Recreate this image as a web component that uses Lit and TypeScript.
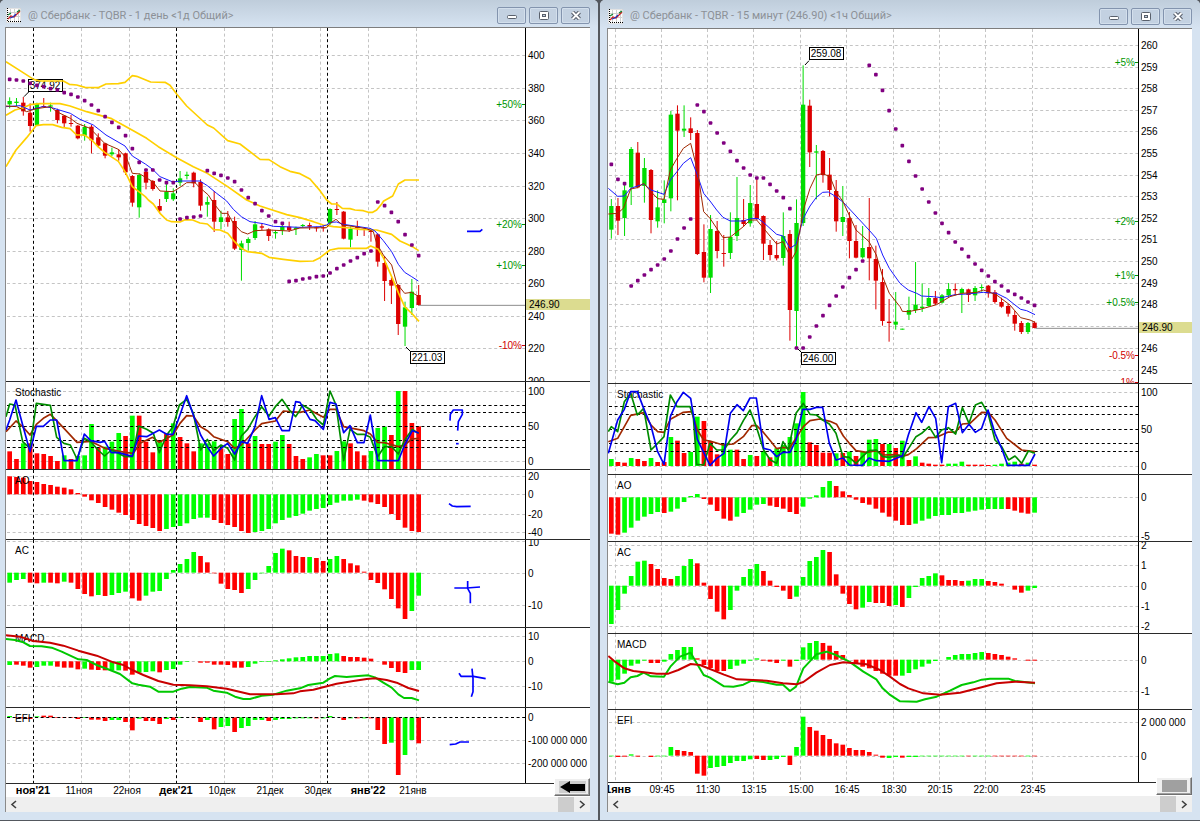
import { LitElement, html, svg, css } from "lit";
import { customElement, property } from "lit/decorators.js";

/* Geometry is kept in chart units: three units make one CSS pixel. */
const UNIT = 3;

type Label = [y: number, text: string];

interface Line {
  kind: "thin" | "mid" | "thick";
  color: string;
  points: string;
}

interface Pane {
  name: string;
  height: number;
  base: number;
  grid: number[];
  levels?: number[];
  labels: Label[];
  percents?: Label[];
  zero?: number;
  bars?: string;
  candles?: string;
  dots?: string;
  lines?: Line[];
  flags?: { x: number; y: number; text: string; from: string }[];
  last?: { y: number; x: number; text: string };
  notes?: string[];
}

interface Chart {
  title: string;
  titleHeight: number;
  padLeft: number;
  originX: number;
  originY: number;
  axisWidth: number;
  timeHeight: number;
  scrollHeight: number;
  firstBar: number;
  step: number;
  verticals: number[];
  months: number[];
  panes: Pane[];
  times: [x: number, text: string, bold?: boolean][];
  arrow: boolean;
}

const YELLOW = "#ffd000";
const BLUE = "#1a1aff";
const BROWN = "#a02800";

const daily: Chart = {
  title: "@ Сбербанк - TQBR - 1 день <1д Общий>",
  titleHeight: 27,
  padLeft: 6,
  originX: 18,
  originY: 84,
  axisWidth: 65,
  timeHeight: 13,
  scrollHeight: 15,
  firstBar: 29,
  step: 20.45,
  verticals: [245, 389, 674, 818, 962, 1104, 1248],
  months: [101, 530, 982],
  arrow: true,
  times: [
    [99, "ноя'21", true], [237, "11ноя"], [381, "22ноя"], [528, "дек'21", true], [666, "10дек"],
    [810, "21дек"], [954, "30дек"], [1104, "янв'22", true], [1239, "21янв"],
  ],
  panes: [
    {
      name: "", height: 354, base: 0,
      grid: [164, 265, 361, 458, 558, 655, 752, 849, 949, 1045],
      labels: [[164, "400"], [265, "380"], [361, "360"], [458, "340"], [558, "320"], [655, "300"], [752, "280"], [849, "260"], [949, "240"], [1045, "220"], [1143, "200"]],
      percents: [[312, "+50%"], [672, "+20%"], [794, "+10%"], [1034, "-10%"]],
      candles:
        "292,303,313,325g 294,305,309,318g 291,308,334,347r 310,338,378,395r 308,311,376,378g 294,318,321,322r 308,316,320,335g 326,330,360,370r 345,347,370,382r 345,369,372,380r 375,377,415,418r 372,381,407,422g 375,380,421,460r 400,412,437,442r 428,430,467,475r 443,457,463,468g 447,463,472,482r 458,460,517,525r 525,528,608,620r 520,525,622,653g 508,515,548,568r 540,543,567,572r 597,618,632,640r 545,575,597,606g 565,580,598,603g 513,535,548,558g 515,524,528,538g 515,518,550,562r 538,546,617,632r 590,606,614,650g 573,600,665,696r 632,652,666,688g 633,652,666,680r 650,663,746,750r 722,730,750,842g 712,717,729,752g 663,673,714,720g 670,679,683,690r 685,688,708,723r 690,696,700,716g 675,680,691,705g 665,680,690,696r 680,683,687,705g 672,675,678,682g 668,675,680,690r 680,682,685,695r 678,682,685,695r 625,627,670,675g 606,627,630,645r 633,635,716,718r 680,687,719,742g 662,680,685,708r 685,687,690,708r 688,692,696,725r 700,703,785,800r 768,789,843,903r 833,840,857,912r 853,855,972,1005r 905,922,980,1038g 837,875,924,945g 855,885,915,917r",
      dots: "238 240 243 250 256 260 266 270 278 283 291 302 315 332 350 367 382 407 446 487 510 510 540 548 548 657 653 651 648 512 520 526 534 545 570 593 611 632 648 665 670 844 842 837 834 830 828 819 806 795 783 773 761 753 606 617 637 665 704 735 767",
      lines: [
        { kind: "mid", color: YELLOW, points: "18,185 60,212 101,238 120,243 190,243 208,253 230,255 255,262 294,263 318,252 355,251 375,247 397,227 410,229 452,246 495,247 510,256 530,282 560,318 622,375 641,384 683,422 720,432 780,478 807,479 840,500 870,514 900,521 930,537 960,572 980,600 995,612 1010,612 1027,625 1050,626 1065,630 1090,632 1105,637 1118,637 1130,630 1145,612 1150,604 1178,588 1195,552 1215,540 1257,540" },
        { kind: "mid", color: YELLOW, points: "18,346 45,330 68,324 90,314 120,311 180,311 210,318 260,335 335,356 400,392 440,415 475,440 530,473 580,500 622,520 683,560 740,600 780,618 810,628 860,644 900,653 940,665 970,675 1000,680 1050,684 1080,688 1130,690 1175,703 1200,723 1220,732 1237,740 1256,752" },
        { kind: "mid", color: YELLOW, points: "18,500 48,450 80,413 108,377 130,374 158,374 185,382 210,386 230,405 253,405 275,420 294,440 314,457 355,484 375,515 385,535 397,560 436,590 445,600 460,612 480,640 500,660 515,665 540,666 555,659 578,660 600,669 622,672 641,689 660,690 683,700 704,725 724,745 743,755 785,760 807,772 850,778 900,784 940,783 960,773 990,750 1015,745 1100,745 1112,738 1135,748 1150,773 1175,830 1195,878 1214,920 1237,942 1257,964" },
        { kind: "thin", color: BLUE, points: "18,320 60,317 90,330 128,320 155,323 211,340 240,358 280,375 318,405 375,438 397,468 436,492 458,508 480,530 519,546 540,543 600,543 622,557 650,580 680,603 700,628 724,650 750,665 790,671 820,679 900,682 960,680 980,675 990,667 1010,666 1030,673 1110,685 1125,693 1150,722 1175,755 1195,793 1214,817 1235,830 1255,843" },
        { kind: "thin", color: BROWN, points: "18,318 50,320 80,335 109,326 151,320 170,335 211,355 231,370 270,385 314,430 355,448 380,475 397,520 420,522 458,545 480,573 519,575 540,562 560,548 585,548 602,565 625,585 641,610 665,640 683,640 700,670 724,695 743,702 765,692 807,690 868,693 900,684 980,683 990,670 1008,658 1027,675 1050,678 1100,686 1120,695 1130,730 1150,765 1175,795 1190,850 1214,880 1235,877 1257,890" },
      ],
      flags: [
        { x: 85, y: 237, text: "374.92", from: "86,276 72,290" },
        { x: 1231, y: 1054, text: "221.03", from: "1231,1054 1218,1041" },
      ],
      last: { y: 916, x: 1257, text: "246.90" },
      notes: ["1401,694 1440,694 1447,688"],
    },
    {
      name: "Stochastic", height: 88, base: 1140,
      grid: [33, 243], levels: [75, 97, 139, 181, 202],
      labels: [[33, "100"], [139, "50"], [243, "0"]],
      zero: 267,
      bars: "214r 237r 190g 190r 220r 222r 228r 243r 226g 237r 228g 226g 132g 202r 200g 185g 159g 168r 107g 107r 185r 217r 180g 160r 130g 171r 190r 214r 190g 190g 184g 205r 222r 117g 87g 190r 168g 192r 192r 185g 165g 192r 228r 237r 232g 222g 226r 226r 213g 184g 190r 214r 226r 213g 144g 140g 165r 33g 33r 129r 139r",
      lines: [
        { kind: "mid", color: BROWN, points: "18,155 48,123 68,140 90,165 109,133 130,115 151,103 170,122 192,145 231,187 272,184 314,205 375,217 400,220 420,190 458,172 478,187 519,165 540,130 560,107 580,108 602,140 622,152 641,170 683,185 704,205 724,195 765,150 785,131 826,123 850,93 900,97 930,90 970,112 990,88 1008,88 1031,140 1092,152 1111,162 1133,187 1153,188 1195,200 1214,195 1235,177 1256,175" },
        { kind: "mid", color: "#008c00", points: "18,110 29,72 45,75 68,185 90,205 109,70 151,76 170,172 192,190 211,195 231,237 253,175 272,185 294,210 314,228 334,210 355,220 375,230 397,229 416,138 440,148 460,160 478,218 500,165 519,140 538,75 560,58 580,100 602,210 622,178 641,212 663,195 683,205 704,240 724,168 743,148 765,110 785,80 807,108 826,80 846,58 868,90 887,110 900,90 907,75 930,88 950,118 970,135 990,33 1008,75 1031,242 1050,148 1072,163 1092,163 1111,172 1133,230 1153,200 1175,200 1195,222 1214,180 1237,148 1256,160" },
        { kind: "mid", color: "#0000f0", points: "18,150 29,120 48,60 68,135 90,215 109,139 130,139 151,120 170,120 192,242 231,242 253,162 272,182 300,187 314,184 334,218 355,218 397,229 416,168 440,170 478,150 500,163 519,163 538,110 560,47 580,105 602,165 622,200 641,228 663,205 683,190 704,222 724,185 743,190 765,140 785,47 807,118 826,113 846,152 868,152 887,65 900,67 930,118 945,122 970,148 990,67 1008,72 1031,158 1050,137 1072,188 1092,188 1111,105 1133,242 1195,242 1214,195 1237,152 1256,159" },
      ],
      notes: ["1350,122 1351,103 1360,90 1387,90 1387,103 1375,125 1373,152", "1368,191 1376,191"],
    },
    {
      name: "AO", height: 70, base: 1140,
      grid: [288, 343, 401, 457],
      labels: [[288, "20"], [343, "0"], [401, "-20"], [457, "-40"]],
      zero: 343,
      bars: "289r 291r 293r 303r 306r 312r 315r 320r 323r 328r 339r 350r 361r 369r 381r 389r 398r 405r 420r 432r 438r 444r 453r 447g 441g 438g 430g 417g 413g 413g 420r 429r 435r 441r 453r 459r 456g 453g 447g 430g 420g 413g 408g 401g 392g 387g 384g 375g 368g 362g 362g 359g 362r 367r 372r 381r 402r 420r 443r 453r 456r",
      notes: ["1347,371 1357,378 1370,380 1412,379"],
    },
    {
      name: "AC", height: 88, base: 1140,
      grid: [484, 578, 676],
      labels: [[487, "10"], [578, "0"], [676, "-10"]],
      zero: 578,
      bars: "608g 600g 597g 608r 610r 608g 608r 610r 605g 608r 627r 642r 649r 645g 648r 645g 639g 635g 655r 662r 647g 635g 633g 597g 570g 552g 537g 516g 528r 547r 580r 611r 627r 630r 639r 627g 600g 580g 558g 519g 506g 511r 528r 531r 531g 534r 543r 537g 528g 537r 550r 556r 575r 600r 609r 628r 657r 685r 717r 693g 647g",
      notes: ["1363,624 1400,624 1440,621", "1403,603 1403,625 1411,640 1411,670"],
    },
    {
      name: "MACD", height: 80, base: 1800,
      grid: [109, 184, 259],
      labels: [[109, "10"], [184, "0"], [259, "-10"]],
      zero: 184,
      bars: "195g 194r 197r 203r 201g 197g 197g 200r 203r 203r 208r 206g 209r 210r 211r 211g 211g 212r 224r 218g 216g 214g 217r 210g 207g 194g 186g - 188r 188r 194r 194r 195r 203r 203r 201g 191g 186g 186g 181g 178g 175g 172g 171g 168g 168g 168g 162g 160g 168r 171r 171r 173r 176r - 194r 204r 216r 219r 210g 210g",
      lines: [
        { kind: "thick", color: "#00c800", points: "18,117 45,120 70,127 90,138 125,139 155,143 185,155 235,178 260,180 290,195 330,210 360,222 397,250 415,254 450,260 475,275 520,275 545,266 570,261 620,263 640,272 680,278 705,290 730,297 750,297 785,287 820,284 860,272 900,265 925,255 970,248 990,235 1005,228 1040,231 1075,228 1105,226 1125,232 1150,248 1175,263 1195,283 1212,294 1235,294 1257,301" },
        { kind: "thick", color: "#c80000", points: "18,106 60,110 100,123 150,128 190,137 235,152 290,167 340,187 370,195 397,210 430,225 475,243 520,254 570,256 620,259 680,266 750,283 830,283 880,280 900,274 940,269 975,260 1010,251 1060,243 1100,237 1125,235 1160,240 1190,248 1225,264 1257,273" },
      ],
      notes: ["1377,220 1383,229 1420,229 1457,236", "1416,206 1419,235 1419,275 1414,290"],
    },
    {
      name: "EFI", height: 76, base: 1800,
      grid: [421, 490], levels: [352],
      labels: [[352, "0"], [421, "-100 000 000"], [490, "-200 000 000"]],
      zero: 352,
      bars: "348g 354r 355r 357r 349g 347r 347r 353r 353r 354r 357r 353g 359r 359r 363r 360g 360g 366r 391r 356g 363r 363r 372r 357g 360r 353g - 353r 366r 360g 388r 381g 378g 396r 384g 378g 360g 360g 363r 360g 357g 357g 355g 355g 355g 355r 355g 348g - 360r 355g 355r 355g 355r 390r 432r 428g 525r 465g 420g 430r",
      notes: ["1349,434 1367,432 1380,426 1407,426"],
    },
  ],
};

const intraday: Chart = {
  title: "@ Сбербанк - TQBR - 15 минут (246.90) <1ч Общий>",
  titleHeight: 28,
  padLeft: 8,
  originX: 24,
  originY: 87,
  axisWidth: 54,
  timeHeight: 13,
  scrollHeight: 16,
  firstBar: 34,
  step: 19.84,
  verticals: [46, 184, 322, 460, 601, 740, 880, 1018, 1156, 1297],
  months: [],
  arrow: false,
  times: [
    [45, "21янв", true], [186, "09:45"], [324, "11:30"], [462, "13:15"], [603, "15:00"], [742, "16:45"],
    [882, "18:30"], [1019, "20:15"], [1158, "22:00"], [1299, "23:45"],
  ],
  panes: [
    {
      name: "", height: 355, base: 0,
      grid: [134, 200, 265, 331, 394, 458, 525, 589, 655, 718, 782, 849, 913, 979, 1043, 1109],
      labels: [[134, "260"], [200, "259"], [265, "258"], [331, "257"], [394, "256"], [458, "255"], [525, "254"], [589, "253"], [655, "252"], [718, "251"], [782, "250"], [849, "249"], [913, "248"], [1043, "246"], [1109, "245"]],
      percents: [[185, "+5%"], [664, "+2%"], [825, "+1%"], [906, "+0.5%"], [1066, "-0.5%"], [1146, "-1%"]],
      candles:
        "597,618,689,716g 594,618,662,705r 553,571,654,708g 441,447,562,615g 426,458,562,565r 474,504,558,608g 507,510,660,700r 571,622,664,683g 541,598,609,670g 333,344,595,634g 316,341,392,601r 316,386,392,411g 352,385,399,420r 390,399,762,765r 673,756,833,847r 645,687,833,879g 663,693,753,775r 705,759,762,800r 637,711,759,777g 531,654,708,723g 597,660,672,680r 555,609,670,680g 537,612,657,660r 646,648,731,780r 720,735,765,781r 723,765,775,781r 637,708,774,797g 690,702,930,1022r 598,669,933,1042g 196,314,669,678g 299,317,457,501r 435,454,458,598g 450,453,525,548r 474,524,570,589r 540,573,664,695r 558,651,666,708g 636,654,723,775r 675,723,773,775r 678,744,772,776g 594,741,775,841r 737,777,842,928r 807,846,963,977r 897,965,969,1025r 876,965,974,989g 986,986,989,989g 890,930,944,960g 786,914,930,939g 850,920,924,936g 864,894,918,920g 873,894,911,915r 882,886,908,911g 849,867,886,892g 850,867,871,886r 863,867,879,939g 866,868,885,906r 858,864,886,903g 853,861,864,875g 855,857,880,893r 870,877,906,911r 893,906,920,923r 912,918,941,950r 933,945,971,992r 963,969,996,1002r 966,969,996,1002g 964,968,984,985r",
      dots: "493 538 551 858 842 825 809 795 777 753 717 684 657 315 335 369 399 429 454 482 504 525 534 534 553 573 593 626 1044 1044 1011 978 947 916 888 861 833 809 783 196 224 271 332 387 437 484 528 567 606 639 670 698 726 747 770 792 811 828 845 858 873 883 894 906 916",
      lines: [
        { kind: "thin", color: BLUE, points: "25,565 53,589 73,588 92,565 131,552 153,570 192,583 211,540 231,515 250,490 272,473 292,525 311,580 330,603 350,630 369,652 391,663 430,663 455,655 475,656 491,668 530,703 549,708 570,745 588,733 610,655 630,618 649,592 668,577 685,576 708,590 730,607 768,648 807,690 829,715 848,765 868,805 900,850 907,856 925,870 950,880 965,888 1000,890 1025,893 1065,884 1100,882 1150,877 1190,880 1220,895 1245,915 1262,928 1280,932 1305,944" },
        { kind: "thin", color: BROWN, points: "25,642 53,640 70,625 92,567 112,563 131,550 153,575 173,596 192,598 211,510 231,475 250,445 272,430 292,510 311,635 330,655 369,713 391,711 430,680 450,660 470,660 530,732 549,725 575,778 588,755 600,690 610,630 630,565 649,525 668,521 690,530 708,575 729,605 768,690 807,725 829,765 848,830 868,880 900,920 907,934 925,935 960,928 1010,914 1050,890 1085,880 1130,877 1150,870 1165,875 1190,885 1230,915 1262,953 1290,960 1305,967" },
      ],
      flags: [
        { x: 627, y: 142, text: "259.08", from: "627,182 615,195" },
        { x: 604, y: 1057, text: "246.00", from: "605,1058 590,1043" },
      ],
      last: { y: 985, x: 1306, text: "246.90" },
    },
    {
      name: "Stochastic", height: 91, base: 1140,
      grid: [36, 257], levels: [79, 102, 147, 190, 213],
      labels: [[36, "100"], [147, "50"], [257, "0"]],
      zero: 258,
      bars: "237g 246r 248r 234g 237r 243r 234g 246r 246r 171g 182r 219r 216g 110g 123r 183r 223r 190g 209g 209r 237r 225g 228r 213g 232r 205g 195g 171g 130g 36g 187r 195r 218r 218r 220g 219r 215g 228r 216g 179g 177g 192r 192g 204r 182g 240r 229g 248r 251r 254r 254r 251g 251g 245g 254r 254r 254r 255r 254g 251g 248g 245g 251r 248g 254r",
      lines: [
        { kind: "mid", color: BROWN, points: "25,185 53,175 73,140 92,106 131,98 153,135 173,155 192,157 211,118 250,97 275,95 292,150 311,180 330,183 369,195 400,192 430,170 455,137 470,137 491,158 511,182 530,206 549,202 568,205 588,175 610,140 630,122 660,117 690,124 710,133 730,168 748,190 768,212 800,217 829,212 848,225 890,224 907,229 925,224 950,206 985,173 1010,172 1045,156 1065,157 1087,132 1110,130 1145,97 1165,98 1185,120 1220,175 1265,210 1305,215" },
        { kind: "mid", color: "#008c00", points: "25,155 34,140 53,155 73,65 92,40 112,105 131,85 153,210 173,190 192,170 211,45 231,80 270,80 280,110 290,253 311,255 330,190 350,210 372,210 391,180 411,158 430,122 450,90 469,140 491,210 511,240 530,250 549,185 565,210 588,100 610,70 630,103 649,105 668,120 688,132 708,160 729,230 748,232 768,250 787,230 807,212 829,210 848,230 868,232 900,226 907,235 948,170 965,160 987,140 1007,172 1025,150 1045,143 1067,162 1087,83 1107,130 1126,75 1145,67 1164,100 1185,180 1205,200 1226,240 1245,228 1265,250 1285,213 1305,220" },
        { kind: "mid", color: "#0000f0", points: "25,220 53,120 73,88 92,35 112,35 131,85 153,138 173,215 192,253 211,110 231,65 250,37 272,55 292,178 330,256 350,235 372,220 391,100 411,74 430,92 450,54 469,54 491,205 511,210 530,230 549,217 570,217 588,180 608,88 630,88 649,82 668,82 688,190 708,240 729,234 748,255 787,256 807,234 829,242 868,244 900,230 907,228 925,165 948,98 965,127 987,80 1007,115 1025,248 1045,80 1067,70 1087,158 1107,133 1126,157 1145,145 1164,90 1185,160 1205,205 1223,256 1287,256 1305,222" },
      ],
    },
    {
      name: "AO", height: 67, base: 1140,
      grid: [352, 469],
      labels: [[352, "0"], [469, "-5"]],
      zero: 352,
      bars: "461r 464r 458g 443g 422g 410g 402g 396g 399r 395g 386g 366g 348g 342g 357r 374r 393r 416r 422r 410g 399g 389g 374g 372g 377r 381r 386r 396r 402r 380g 356g 346g 321g 303g 318r 334r 345r 359r 369r 374r 386r 398r 410r 422r 435r 435r 431g 422g 416g 408g 405g 405g 399g 399g 395g 392g 389g 387g 387g 387g 387r 392r 398r 401r 398g",
    },
    {
      name: "AC", height: 92, base: 1140,
      grid: [496, 556, 617, 679, 737],
      labels: [[496, "2"], [556, "1"], [617, "0"], [679, "-1"], [737, "-2"]],
      zero: 617,
      bars: "732g 690g 641g 588g 545g 542g 552r 567r 594r 597r 588g 558g 537g 550r 608r 657r 695r 718r 690g 632g 591g 567g 552g 573r 602r 621r 632r 657r 650g 591g 543g 531g 510g 516r 583r 641r 672r 688r 683g 666g 669r 669r 678r 675g 681r 654g 621g 594g 588g 580g 586r 600r 600r 603r 602g 597g 597g 603r 606r 611r - 629r 638r 632g 624g",
    },
    {
      name: "MACD", height: 76, base: 1140,
      grid: [839, 932],
      labels: [[839, "0"], [932, "-1"]],
      zero: 839,
      bars: "905g 899g 881g 857g 851g 842g 849r 849r 845g 822g 810g 801g 801g 835r 855r 864r 873r 873r 867g 857g 851g 842g 835g 842r 845r 849r 842g 860r 843g 802g 789g 783g 789r 797r 813r 825r - 852r 860r 865r 873r 881r 887r 887r 887g 879g 868g 860g 851g 843g - 831g 825g 822g 822g 819g 816g 819r 822r 825r 830r 835r - 842r 842r",
      lines: [
        { kind: "thick", color: "#00c800", points: "25,905 53,913 73,908 92,892 112,888 131,878 153,889 192,890 211,860 240,830 272,818 290,850 311,885 330,893 372,919 400,920 430,914 455,902 490,906 530,914 549,914 570,933 588,920 610,865 649,823 680,815 708,825 748,845 790,875 829,898 848,925 868,943 900,964 950,965 975,958 1010,950 1050,932 1085,915 1120,907 1145,899 1170,896 1225,896 1245,903 1305,910" },
        { kind: "thick", color: "#c80000", points: "25,828 45,845 73,865 100,873 170,881 205,881 235,870 272,852 300,855 372,884 411,898 500,902 549,910 590,913 610,906 649,878 690,855 730,847 800,853 840,870 870,890 900,912 925,925 970,940 1020,944 1080,938 1145,922 1190,910 1245,905 1305,908" },
      ],
    },
    {
      name: "EFI", height: 73, base: 1140,
      grid: [1027, 1127],
      labels: [[1027, "2 000 000"], [1127, "0"]],
      zero: 1127,
      bars: "1129g 1131r 1130r 1123g 1130r - 1131r 1129g 1129g 1101g 1110r 1113r 1116r 1181r 1187r 1164g 1161g 1158g 1149g 1143g 1143g 1138g 1137r 1140r 1140g 1137g 1131g 1155r 1101g 1010g 1041r 1052r 1065r 1077r 1090r 1094r 1104r 1110r 1110r 1116r 1124r 1133r 1134g 1131g 1133r 1131g 1131g 1129g 1129g 1129g 1129g 1129g 1129g 1129g 1129r 1129g 1129g 1129g 1129r 1129r 1129r 1129r 1129r 1129g 1129r",
    },
  ],
};

const barFill = (c: string) => (c === "g" ? "#00ff00" : "#ff0000");
const candleFill = (c: string) => (c === "g" ? "#00dc00" : "#dc0000");
const WIDTH = { thin: 3, mid: 5, thick: 6 };

@customElement("chart-window")
export class ChartWindow extends LitElement {
  @property({ attribute: false }) chart!: Chart;

  static styles = css`
    :host {
      display: flex;
      flex-direction: column;
      min-width: 0;
      box-sizing: border-box;
      border-radius: 5px 5px 0 0;
      background: #d6e3f1;
      font-family: "Liberation Sans", Arial, sans-serif;
      font-size: 10px;
      overflow: hidden;
    }
    .title {
      display: flex;
      align-items: center;
      gap: 7px;
      box-sizing: border-box;
      padding: 4px 8px 0 0;
      background: linear-gradient(#bfcddb, #d6e3f1);
    }
    .title svg {
      flex: none;
    }
    h1 {
      flex: 1;
      min-width: 0;
      margin: 0;
      font: 400 11px Roboto, "Open Sans", sans-serif;
      line-height: 16px;
      color: #8c9197;
      white-space: nowrap;
      overflow: hidden;
    }
    .controls {
      display: flex;
      gap: 3px;
    }
    .controls button {
      display: grid;
      place-items: center;
      width: 29px;
      height: 17px;
      padding: 0;
      border: 1px solid #8394ae;
      border-radius: 2px;
      background: #c3d1e1;
      box-shadow: inset 0 0 0 1px #d3dfec;
    }
    .body {
      position: relative;
      border-top: 1px solid #7d7d7d;
      box-shadow: -1px 0 0 #8a8a8a;
      background: #fff;
    }
    .pane {
      display: flex;
      box-sizing: border-box;
      border-bottom: 1px solid #2a2a2a;
    }
    .plot {
      flex: 1;
      min-width: 0;
      height: 100%;
      display: block;
      overflow: hidden;
    }
    .axis {
      flex: none;
      height: 100%;
      box-sizing: border-box;
      border-left: 1px solid #000;
      overflow: hidden;
    }
    .times {
      display: block;
      width: 100%;
      overflow: hidden;
    }
    .bold {
      font-size: 11px;
      font-weight: 700;
    }
    .end {
      text-anchor: end;
    }
    .mid {
      text-anchor: middle;
    }
    .jump {
      position: absolute;
      right: 0;
      display: grid;
      place-items: center;
      width: 36px;
      height: 18px;
      padding: 0;
      border: 1px solid;
      border-color: #fff #707070 #707070 #fff;
      background: #efefef;
      box-shadow: inset -1px -1px 0 #a0a0a0;
    }
    .scroll {
      display: flex;
      justify-content: space-between;
      background: #efefef;
    }
    .scroll button {
      display: grid;
      place-items: center;
      width: 16px;
      height: 100%;
      padding: 0;
      border: 0;
      background: none;
    }
    .tail {
      display: flex;
    }
    .thumb {
      width: 16px;
      background: #cdcdcd;
    }
  `;

  private plot(pane: Pane) {
    const c = this.chart;
    let top = c.originY;
    for (const p of c.panes) {
      if (p === pane) break;
      top += p.height * UNIT;
    }
    const dy = pane.base - top;
    const x = (i: number) => c.firstBar + i * c.step;
    const toY = (v: number) => Math.round((v + dy) / UNIT);
    const zero = pane.zero ?? 0;
    const bars = (pane.bars ?? "").split(" ").filter(Boolean);
    const candles = (pane.candles ?? "").split(" ").filter(Boolean);
    const dots = (pane.dots ?? "").split(" ").filter(Boolean);
    const h = pane.height * UNIT;
    const hline = (v: number, color: string) => {
      const y = toY(v);
      return svg`<line x1="1" x2="100%" y1=${y + 0.5} y2=${y + 0.5} stroke=${color} stroke-dasharray="3 2.6"/>`;
    };
    const vline = (v: number, color: string) => {
      const px = Math.floor((v - c.originX) / UNIT) + 0.5;
      return svg`<line x1=${px} x2=${px} y1="0" y2=${h / UNIT} stroke=${color} stroke-dasharray="3 2.6"/>`;
    };
    return html`
      <div class="pane" style="height:${pane.height}px">
        <svg class="plot" role="img" aria-label=${pane.name || "Price"}>
          ${pane.grid.map((v) => hline(v, "#c4c4c4"))}
          ${c.verticals.map((v) => vline(v, "#c4c4c4"))}
          <g transform="scale(${1 / UNIT}) translate(${-c.originX} ${dy})">
            ${bars.map((b, i) => {
              if (b === "-") return null;
              const v = parseFloat(b);
              return svg`<rect x=${x(i) - 7} width="14" y=${Math.min(v, zero)} height=${Math.max(2, Math.abs(v - zero))} fill=${barFill(b.slice(-1))}/>`;
            })}
          </g>
          ${(pane.levels ?? []).map((v) => hline(v, "#000"))}
          ${c.months.map((v) => vline(v, "#000"))}
          <text x="9" y="14">${pane.name}</text>
          ${(pane.flags ?? []).map(
            (f) => svg`
              <rect x=${Math.round((f.x - c.originX) / UNIT) + 0.5} y=${toY(f.y) + 0.5} width="34" height="12" fill="#fff" stroke="#000"/>
              <text class="mid" x=${Math.round((f.x - c.originX) / UNIT) + 17} y=${toY(f.y) + 10}>${f.text}</text>`
          )}
          <g transform="scale(${1 / UNIT}) translate(${-c.originX} ${dy})" fill="none">
            ${(pane.flags ?? []).map((f) => svg`<polyline points=${f.from} stroke="#000" stroke-width="3"/>`)}
            ${candles.map((s, i) => {
              const [hi, a, b, lo] = s.slice(0, -1).split(",").map(Number);
              const fill = candleFill(s.slice(-1));
              return svg`<rect x=${x(i) - 1.5} width="3" y=${hi} height=${lo - hi} fill=${fill}/>
                <rect x=${x(i) - 6.5} width="13" y=${a} height=${b - a} fill=${fill}/>`;
            })}
            ${(pane.lines ?? []).map(
              (l) => svg`<polyline points=${l.points} stroke=${l.color} stroke-width=${WIDTH[l.kind]} stroke-linejoin="round"/>`
            )}
            ${dots.map((d, i) => svg`<rect x=${x(i) - 5.5} y=${+d - 5.5} width="11" height="11" rx="3" fill="#800080"/>`)}
            ${(pane.notes ?? []).map((n) => svg`<polyline points=${n} stroke="#0000ff" stroke-width="5" stroke-linejoin="round"/>`)}
            ${pane.last ? svg`<line x1=${pane.last.x} x2="9000" y1=${pane.last.y} y2=${pane.last.y} stroke="#8c8c8c" stroke-width="3"/>` : null}
          </g>
          ${(pane.percents ?? []).map(([v, t]) => {
            const color = t[0] === "+" ? "#009600" : "#d00000";
            const y = toY(v);
            return svg`<text class="end" x="100%" dx="-3" y=${y + 4} fill=${color}>${t}</text>
              <svg x="100%" y=${y} width="4" height="1" overflow="visible"><rect x="-3" width="3" height="1" fill=${color}/></svg>`;
          })}
        </svg>
        <svg class="axis" width=${c.axisWidth} aria-hidden="true">
          ${pane.labels.map(([v, t]) => svg`<text x="2" y=${toY(v) + 4}>${t}</text>`)}
          ${pane.last
            ? svg`<rect width="100%" y=${toY(pane.last.y) - 6} height="11" fill="#dcdc90"/>
                <text x="3" y=${toY(pane.last.y) + 3}>${pane.last.text}</text>`
            : null}
        </svg>
      </div>
    `;
  }

  render() {
    const c = this.chart;
    return html`
      <header class="title" style="height:${c.titleHeight}px;padding-left:${c.padLeft}px">
        <svg width="15" height="15" viewBox="0 0 15 15" aria-hidden="true">
          <rect width="15" height="15" fill="#fff" stroke="#c8c8c8" />
          <path d="M4.5 1v13M8.5 1v13M12.5 1v13M1 4.5h13M1 8.5h13" stroke="#cfcfcf" />
          <path d="M1.5 0v13.5H15" stroke="#000" fill="none" stroke-dasharray="1 1" />
          <path d="M2 11l3-3 3 1 3-3 3-3" stroke="#d02020" stroke-width="1.2" fill="none" />
          <path d="M4 10l3-1 3-3" stroke="#2038c0" stroke-width="1.2" fill="none" />
          <path d="M2 7l3-2M11 4l3-2" stroke="#108030" stroke-width="1.2" fill="none" />
        </svg>
        <h1>${c.title}</h1>
        <div class="controls">
          <button aria-label="Minimize">
            <svg width="12" height="9"><rect x="1.5" y="4.5" width="9" height="3" rx="1" fill="#fff" stroke="#59606c" /></svg>
          </button>
          <button aria-label="Maximize">
            <svg width="12" height="9"><rect x="1.5" y=".5" width="9" height="8" rx="1" fill="#fff" stroke="#59606c" /><rect x="4.5" y="3.5" width="3" height="2" fill="#c3d1e1" stroke="#59606c" /></svg>
          </button>
          <button aria-label="Close">
            <svg width="12" height="9"><path d="M2.5 1l7 7M9.5 1l-7 7" stroke="#59606c" stroke-width="4" /><path d="M2.5 1l7 7M9.5 1l-7 7" stroke="#fff" stroke-width="1.8" /></svg>
          </button>
        </div>
      </header>
      <div class="body" style="margin:0 8px 0 ${c.padLeft}px">
        ${c.panes.map((p) => this.plot(p))}
        <svg class="times" height=${c.timeHeight}>
          ${c.times.map(
            ([x, t, b]) => svg`<text class=${b ? "mid bold" : "mid"} x=${Math.round((x - c.originX) / UNIT)} y="10">${t}</text>`
          )}
        </svg>
        <button class="jump" aria-label="Scroll to the latest bar" style="bottom:${c.scrollHeight + 1}px">
          ${c.arrow
            ? html`<svg width="27" height="12"><rect width="27" height="12" fill="#cdcdcd" /><path d="M1 6L11 0v3h15v7H11v2z" fill="#000" /></svg>`
            : html`<svg width="25" height="12"><rect width="25" height="12" fill="#a0a0a0" /></svg>`}
        </button>
        <div class="scroll" style="height:${c.scrollHeight}px">
          <button aria-label="Scroll left">
            <svg width="8" height="9"><path d="M6 1L2 4.5L6 8" fill="none" stroke="#404040" stroke-width="1.6" /></svg>
          </button>
          <div class="tail">
            <div class="thumb"></div>
            <button aria-label="Scroll right">
              <svg width="8" height="9"><path d="M2 1L6 4.5L2 8" fill="none" stroke="#404040" stroke-width="1.6" /></svg>
            </button>
          </div>
        </div>
      </div>
    `;
  }
}

@customElement("app-root")
export class AppRoot extends LitElement {
  static styles = css`
    :host {
      display: grid;
      grid-template-columns: 299fr 300fr;
      gap: 2px;
      box-sizing: border-box;
      min-height: 100vh;
      padding-bottom: 1px;
      background: #54585e;
    }
  `;

  render() {
    return html`
      <chart-window .chart=${daily}></chart-window>
      <chart-window .chart=${intraday}></chart-window>
    `;
  }
}
